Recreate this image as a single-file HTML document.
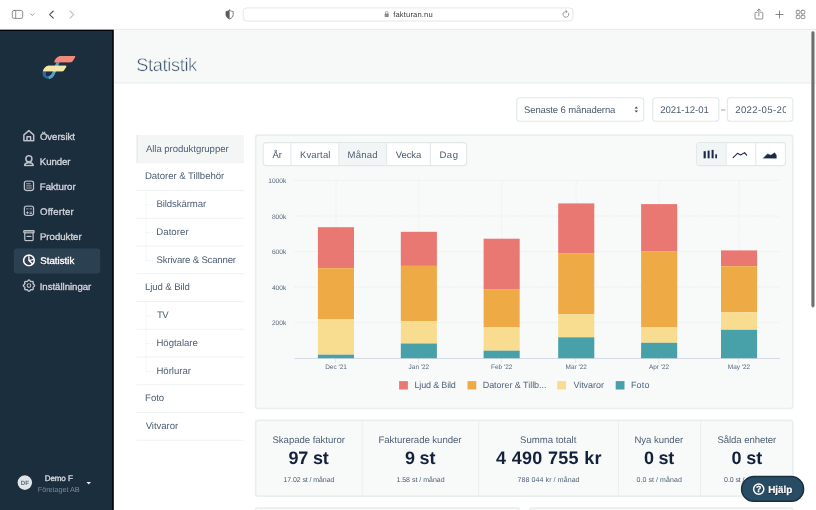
<!DOCTYPE html>
<html lang="sv">
<head>
<meta charset="utf-8">
<title>Statistik – Fakturan.nu</title>
<style>
html,body{margin:0;padding:0}
body{width:816px;height:510px;overflow:hidden;background:#fff;position:relative;font-family:"Liberation Sans",sans-serif;-webkit-font-smoothing:antialiased}
.a{position:absolute;box-sizing:border-box}
.t{position:absolute;white-space:nowrap;line-height:14px;height:14px}
.tw{left:0;top:0;width:816px;height:510px;will-change:transform;text-rendering:geometricPrecision}
</style>
</head>
<body>
<svg class="a" style="left:0;top:0" width="816" height="510" viewBox="0 0 816 510">
<rect x="0" y="0" width="816" height="29.2" fill="#ffffff"/>
<rect x="0" y="28.9" width="816" height="0.9" fill="#dfe1e1"/>
<rect x="243.2" y="7.9" width="329.8" height="13.1" rx="3.6" fill="#fff" stroke="#e2e2e2" stroke-width="0.9"/>
<rect x="113.8" y="29.7" width="702.2" height="53" fill="#f7f9f9"/>
<rect x="113.8" y="82.4" width="702.2" height="1" fill="#e4e9e9"/>
<rect x="0" y="29.7" width="113.8" height="481" fill="#020406"/>
<rect x="0" y="30.9" width="112.15" height="480" fill="#1b2e3e"/>
<rect x="13.8" y="248.5" width="86.4" height="24.9" rx="3" fill="#2b4051"/>
<rect x="136.6" y="135" width="107.4" height="27.5" fill="#f4f6f6"/>
<rect x="136.6" y="135" width="1" height="27.5" fill="#e2e7e7"/>
<rect x="811.2" y="31" width="3.5" height="276.4" rx="1.75" fill="#6f6f6f" stroke="#fbfbfb" stroke-opacity="0.7" stroke-width="0.5"/>
</svg>
<svg class="a" style="left:0;top:0;will-change:transform" width="816" height="30" viewBox="0 0 816 30" fill="none" stroke-linecap="round" stroke-linejoin="round" text-rendering="geometricPrecision">
<rect x="12.3" y="10.4" width="10.4" height="8" rx="1.8" stroke="#7b7b7b" stroke-width="0.85"/>
<path d="M15.7 10.6 V18.2" stroke="#7b7b7b" stroke-width="0.8"/>
<path d="M30.6 13.8 L32.3 15.5 L34 13.8" stroke="#7b7b7b" stroke-width="0.8"/>
<path d="M53.3 11 L49.6 14.6 L53.3 18.2" stroke="#4a4a4a" stroke-width="1.05"/>
<path d="M70 11 L73.7 14.6 L70 18.2" stroke="#bdbdbd" stroke-width="1.05"/>
<path d="M229.6 10.2 C231 11.2 232.2 11.4 233.2 11.4 V14.6 C233.2 16.8 231.6 18.2 229.6 19 C227.6 18.2 226 16.8 226 14.6 V11.4 C227 11.4 228.2 11.2 229.6 10.2 Z" stroke="#5a5a5a" stroke-width="0.8"/>
<path d="M229.6 10.2 C228.2 11.2 227 11.4 226 11.4 V14.6 C226 16.8 227.6 18.2 229.6 19 Z" fill="#5a5a5a" stroke="none"/>
<rect x="384.7" y="13.6" width="4" height="3.3" rx="0.6" fill="#8a8a8a"/>
<path d="M385.5 13.6 V12.6 A1.2 1.2 0 0 1 387.9 12.6 V13.6" stroke="#8a8a8a" stroke-width="0.7"/>
<path d="M568.6 13.2 A2.9 2.9 0 1 1 566.6 11.5" stroke="#7a7a7a" stroke-width="0.75"/>
<path d="M565.8 10.2 L567.2 11.5 L565.8 12.9" stroke="#7a7a7a" stroke-width="0.7"/>
<path d="M757.2 12.4 H756 Q755 12.4 755 13.4 V18 Q755 19 756 19 H761.8 Q762.8 19 762.8 18 V13.4 Q762.8 12.4 761.8 12.4 H760.6" stroke="#7b7b7b" stroke-width="0.85"/>
<path d="M758.9 15.8 V9.2 M757.2 10.8 L758.9 9.1 L760.6 10.8" stroke="#7b7b7b" stroke-width="0.85"/>
<path d="M775.9 14.5 H783.1 M779.5 10.9 V18.1" stroke="#7b7b7b" stroke-width="0.9"/>
<rect x="796.3" y="10.4" width="3.6" height="3.4" rx="0.9" stroke="#7b7b7b" stroke-width="0.85"/>
<rect x="796.3" y="15.2" width="3.6" height="3.4" rx="0.9" stroke="#7b7b7b" stroke-width="0.85"/>
<rect x="801.2" y="10.4" width="3.6" height="3.4" rx="0.9" stroke="#7b7b7b" stroke-width="0.85"/>
<rect x="801.2" y="15.2" width="3.6" height="3.4" rx="0.9" stroke="#7b7b7b" stroke-width="0.85"/>
</svg>
<svg class="a" style="left:0;top:0;filter:drop-shadow(0 0 0.5px rgba(0,0,30,.9)) drop-shadow(0 0.4px 0.4px rgba(0,0,30,.6))" width="114" height="510" viewBox="0 0 114 510" fill="none" stroke-linejoin="round" stroke-linecap="round" text-rendering="geometricPrecision">
<g stroke="none"><path d="M42.5 71.6 C41.5 75.6 44.2 79.5 49.3 79 C51.2 78.8 52.6 78 53.6 76.6 L51.4 74.4 C50.6 75.8 49.4 76.3 48 76.3 C45.9 76.3 45.5 74.2 46.3 71.6 Z" fill="#2c6a92"/><path d="M56.2 62.2 L59.7 62.2 L55.7 72.6 C54.4 76.2 52.4 78.7 49.3 79 L48.2 76.3 C50.3 76 51.6 74.4 52.6 71.8 Z" fill="#5aa0c4"/><path d="M59.6 55.9 H74.4 C75.5 55.9 75.7 56.6 75.1 57.6 L72.9 61 C72.2 62 71.4 62.4 70.2 62.4 H54 C54.6 59.4 56.4 56.6 59.6 55.9 Z" fill="#f08a7c"/><path d="M48.4 65.6 H65.4 C66.5 65.6 66.7 66.3 66.1 67.3 L64.2 70.2 C63.5 71.2 62.7 71.6 61.5 71.6 H42.7 C43.3 68.8 45.2 66.2 48.4 65.6 Z" fill="#f3e6a8"/></g>
<path d="M23.9 134.9 L28.8 130.6 L33.7 134.9 V140.7 H23.9 Z M27 140.7 V136.8 H30.6 V140.7" stroke="#bcc3cb" stroke-width="1.6"/>
<circle cx="28.9" cy="158.8" r="3.05" stroke="#bcc3cb" stroke-width="1.6"/>
<path d="M24.6 165.5 C24.8 163.2 26.6 162.6 28.9 162.6 S33 163.2 33.2 165.5 Z" stroke="#bcc3cb" stroke-width="1.6"/>
<rect x="24.35" y="181.15" width="9.2" height="9.3" rx="2.1" stroke="#bcc3cb" stroke-width="1.35"/>
<path d="M26.6 183.8 H30.4 M26.6 185.9 H31.4 M26.6 188 H31.4" stroke="#bcc3cb" stroke-width="1"/>
<rect x="24.35" y="206.1" width="9.2" height="9.3" rx="2.1" stroke="#bcc3cb" stroke-width="1.35"/>
<path d="M26.5 208.9 H28.2 M29.9 208.9 H31.6 M26.4 212.7 H28.4 M27.4 211.7 V213.7 M29.9 212.1 H31.6 M29.9 213.4 H31.6" stroke="#bcc3cb" stroke-width="0.95"/>
<rect x="23.8" y="230.6" width="10.3" height="2.2" rx="0.5" stroke="#bcc3cb" stroke-width="1.3" fill="#bcc3cb" fill-opacity="0.55"/>
<path d="M24.8 232.8 V239.4 Q24.8 240.6 26 240.6 H31.9 Q33.1 240.6 33.1 239.4 V232.8" stroke="#bcc3cb" stroke-width="1.35"/>
<path d="M27 236.4 H30.9" stroke="#bcc3cb" stroke-width="1.3"/>
<circle cx="28.95" cy="260.45" r="5.3" stroke="#fff" stroke-width="1.65"/>
<path d="M28.9 256.6 V260.6 L32.2 263.4 M28.9 260.6 L33 259.6" stroke="#fff" stroke-width="1.45"/>
<path d="M28.97 280.00 L29.19 280.03 L29.40 280.12 L29.60 280.26 L29.79 280.44 L29.96 280.65 L30.11 280.85 L30.25 281.05 L30.39 281.22 L30.54 281.35 L30.69 281.44 L30.87 281.49 L31.06 281.50 L31.28 281.48 L31.52 281.44 L31.78 281.40 L32.04 281.38 L32.30 281.38 L32.54 281.42 L32.75 281.51 L32.93 281.64 L33.06 281.82 L33.15 282.03 L33.19 282.27 L33.19 282.53 L33.17 282.79 L33.13 283.05 L33.09 283.29 L33.07 283.51 L33.08 283.70 L33.13 283.88 L33.22 284.03 L33.35 284.18 L33.52 284.32 L33.72 284.46 L33.92 284.61 L34.13 284.78 L34.31 284.97 L34.45 285.17 L34.54 285.38 L34.57 285.60 L34.54 285.82 L34.45 286.03 L34.31 286.23 L34.13 286.42 L33.92 286.59 L33.72 286.74 L33.52 286.88 L33.35 287.02 L33.22 287.17 L33.13 287.32 L33.08 287.50 L33.07 287.69 L33.09 287.91 L33.13 288.15 L33.17 288.41 L33.19 288.67 L33.19 288.93 L33.15 289.17 L33.06 289.38 L32.93 289.56 L32.75 289.69 L32.54 289.78 L32.30 289.82 L32.04 289.82 L31.78 289.80 L31.52 289.76 L31.28 289.72 L31.06 289.70 L30.87 289.71 L30.69 289.76 L30.54 289.85 L30.39 289.98 L30.25 290.15 L30.11 290.35 L29.96 290.55 L29.79 290.76 L29.60 290.94 L29.40 291.08 L29.19 291.17 L28.97 291.20 L28.75 291.17 L28.54 291.08 L28.34 290.94 L28.15 290.76 L27.98 290.55 L27.83 290.35 L27.69 290.15 L27.55 289.98 L27.40 289.85 L27.25 289.76 L27.07 289.71 L26.88 289.70 L26.66 289.72 L26.42 289.76 L26.16 289.80 L25.90 289.82 L25.64 289.82 L25.40 289.78 L25.19 289.69 L25.01 289.56 L24.88 289.38 L24.79 289.17 L24.75 288.93 L24.75 288.67 L24.77 288.41 L24.81 288.15 L24.85 287.91 L24.87 287.69 L24.86 287.50 L24.81 287.32 L24.72 287.17 L24.59 287.02 L24.42 286.88 L24.22 286.74 L24.02 286.59 L23.81 286.42 L23.63 286.23 L23.49 286.03 L23.40 285.82 L23.37 285.60 L23.40 285.38 L23.49 285.17 L23.63 284.97 L23.81 284.78 L24.02 284.61 L24.22 284.46 L24.42 284.32 L24.59 284.18 L24.72 284.03 L24.81 283.88 L24.86 283.70 L24.87 283.51 L24.85 283.29 L24.81 283.05 L24.77 282.79 L24.75 282.53 L24.75 282.27 L24.79 282.03 L24.88 281.82 L25.01 281.64 L25.19 281.51 L25.40 281.42 L25.64 281.38 L25.90 281.38 L26.16 281.40 L26.42 281.44 L26.66 281.48 L26.88 281.50 L27.07 281.49 L27.25 281.44 L27.40 281.35 L27.55 281.22 L27.69 281.05 L27.83 280.85 L27.98 280.65 L28.15 280.44 L28.34 280.26 L28.54 280.12 L28.75 280.03 L28.97 280.00 Z" stroke="#bcc3cb" stroke-width="1.5"/>
<circle cx="28.97" cy="285.6" r="1.85" stroke="#bcc3cb" stroke-width="1.2"/>
<circle cx="24.8" cy="482.6" r="7.3" fill="#dfe5e9" stroke="none"/>
<text x="24.8" y="484.8" font-family="Liberation Sans, sans-serif" font-size="6.1" font-weight="700" fill="#5a6c80" stroke="none" text-anchor="middle">DF</text>
<path d="M86.3 482 H91.1 L88.7 484.6 Z" fill="#e8ecef" stroke="none"/>
</svg>
<!-- boxes -->
<svg class="a" style="left:0;top:0;will-change:transform" width="816" height="510" viewBox="0 0 816 510" fill="none">
<rect x="516.8" y="97.7" width="126.90" height="23.60" rx="3" fill="#fff" stroke="#e1e8e8" stroke-width="1.1"/>
<rect x="652.8" y="97.7" width="66.00" height="23.60" rx="3" fill="#fff" stroke="#e1e8e8" stroke-width="1.1"/>
<rect x="727.3" y="97.7" width="65.60" height="23.60" rx="3" fill="#fff" stroke="#e1e8e8" stroke-width="1.1"/>
<rect x="255.6" y="135.1" width="537.20" height="273.40" rx="2.6" fill="#f8fafa" stroke="#eaeeee" stroke-width="1.7"/>
<rect x="263.2" y="142.6" width="203.40" height="23.00" rx="3" fill="#fff" stroke="#e1e8e8" stroke-width="1.1"/>
<rect x="338.8" y="143.1" width="47.9" height="22" fill="#f2f5f5"/>
<path d="M290.9 143.1 V165.1" stroke="#e1e8e8" stroke-width="1.0"/>
<path d="M338.8 143.1 V165.1" stroke="#e1e8e8" stroke-width="1.0"/>
<path d="M386.7 143.1 V165.1" stroke="#e1e8e8" stroke-width="1.0"/>
<path d="M430.4 143.1 V165.1" stroke="#e1e8e8" stroke-width="1.0"/>
<rect x="696.6" y="142.6" width="88.80" height="23.00" rx="3" fill="#fff" stroke="#e1e8e8" stroke-width="1.1"/>
<path d="M726.2 143.1 V165.1 H699.1 Q697.1 165.1 697.1 163.1 V145.1 Q697.1 143.1 699.1 143.1 Z" fill="#f2f5f5"/>
<path d="M726.2 143.1 V165.1" stroke="#e1e8e8" stroke-width="1.0"/>
<path d="M755.8 143.1 V165.1" stroke="#e1e8e8" stroke-width="1.0"/>
<rect x="255.6" y="420.4" width="537.20" height="75.70" rx="2.6" fill="#f8fafa" stroke="#eaeeee" stroke-width="1.7"/>
<path d="M362.2 421 V495.6" stroke="#eaeeee" stroke-width="1.0"/>
<path d="M478.7 421 V495.6" stroke="#eaeeee" stroke-width="1.0"/>
<path d="M618.4 421 V495.6" stroke="#eaeeee" stroke-width="1.0"/>
<path d="M700.5 421 V495.6" stroke="#eaeeee" stroke-width="1.0"/>
<rect x="255.6" y="508.2" width="263.80" height="21.80" rx="2.6" fill="#f8fafa" stroke="#eaeeee" stroke-width="1.7"/>
<rect x="529.6" y="508.2" width="263.20" height="21.80" rx="2.6" fill="#f8fafa" stroke="#eaeeee" stroke-width="1.7"/>
</svg>
<div class="a" style="left:728.3px;top:98.8px;width:58px;height:21.8px;overflow:hidden;will-change:transform;text-rendering:geometricPrecision"><span class="t" id="d2" style="left:7.2px;top:5px;font-size:9.6px;color:#4a5b70;letter-spacing:0.36px">2022-05-20</span></div>
<!-- product list -->
<svg class="a" style="left:0;top:0;will-change:transform" width="816" height="510" viewBox="0 0 816 510">
<rect x="136.6" y="162.25" width="107.4" height="1" fill="#eff2f2"/>
<rect x="136.6" y="190.00" width="107.4" height="1" fill="#eff2f2"/>
<rect x="136.6" y="217.75" width="107.4" height="1" fill="#eff2f2"/>
<rect x="136.6" y="245.50" width="107.4" height="1" fill="#eff2f2"/>
<rect x="136.6" y="273.25" width="107.4" height="1" fill="#eff2f2"/>
<rect x="136.6" y="301.00" width="107.4" height="1" fill="#eff2f2"/>
<rect x="136.6" y="328.75" width="107.4" height="1" fill="#eff2f2"/>
<rect x="136.6" y="356.50" width="107.4" height="1" fill="#eff2f2"/>
<rect x="136.6" y="384.25" width="107.4" height="1" fill="#eff2f2"/>
<rect x="136.6" y="412.00" width="107.4" height="1" fill="#eff2f2"/>
<rect x="136.6" y="439.75" width="107.4" height="1" fill="#eff2f2"/>
<path d="M146.1 190.5 V260.4" stroke="#dfe5e8" stroke-width="0.7" stroke-dasharray="0.9 1.1" fill="none"/><path d="M146.1 204.9 H153.5" stroke="#dfe5e8" stroke-width="0.7" stroke-dasharray="0.9 1.1" fill="none"/><path d="M146.1 232.6 H153.5" stroke="#dfe5e8" stroke-width="0.7" stroke-dasharray="0.9 1.1" fill="none"/><path d="M146.1 260.4 H153.5" stroke="#dfe5e8" stroke-width="0.7" stroke-dasharray="0.9 1.1" fill="none"/>
<path d="M146.1 301.5 V371.4" stroke="#dfe5e8" stroke-width="0.7" stroke-dasharray="0.9 1.1" fill="none"/><path d="M146.1 315.9 H153.5" stroke="#dfe5e8" stroke-width="0.7" stroke-dasharray="0.9 1.1" fill="none"/><path d="M146.1 343.6 H153.5" stroke="#dfe5e8" stroke-width="0.7" stroke-dasharray="0.9 1.1" fill="none"/><path d="M146.1 371.4 H153.5" stroke="#dfe5e8" stroke-width="0.7" stroke-dasharray="0.9 1.1" fill="none"/>
</svg>
<!-- chart card -->
<svg class="a" style="left:0;top:0;will-change:transform" width="816" height="510" viewBox="0 0 816 510" font-family="Liberation Sans, sans-serif" text-rendering="geometricPrecision">
<line x1="294.5" x2="780" y1="180.4" y2="180.4" stroke="#e3e7e8" stroke-width="0.8" stroke-dasharray="1 1.2"/>
<line x1="294.5" x2="780" y1="216.0" y2="216.0" stroke="#e3e7e8" stroke-width="0.8" stroke-dasharray="1 1.2"/>
<line x1="294.5" x2="780" y1="251.5" y2="251.5" stroke="#e3e7e8" stroke-width="0.8" stroke-dasharray="1 1.2"/>
<line x1="294.5" x2="780" y1="287.1" y2="287.1" stroke="#e3e7e8" stroke-width="0.8" stroke-dasharray="1 1.2"/>
<line x1="294.5" x2="780" y1="322.6" y2="322.6" stroke="#e3e7e8" stroke-width="0.8" stroke-dasharray="1 1.2"/>
<line x1="336.0" x2="336.0" y1="180.4" y2="358.2" stroke="#e6eaea" stroke-width="0.8" stroke-dasharray="1 1.2"/>
<line x1="335.6" x2="335.6" y1="358.59999999999997" y2="363.2" stroke="#dde3ea" stroke-width="0.9"/>
<line x1="418.9" x2="418.9" y1="180.4" y2="358.2" stroke="#e6eaea" stroke-width="0.8" stroke-dasharray="1 1.2"/>
<line x1="418.5" x2="418.5" y1="358.59999999999997" y2="363.2" stroke="#dde3ea" stroke-width="0.9"/>
<line x1="501.7" x2="501.7" y1="180.4" y2="358.2" stroke="#e6eaea" stroke-width="0.8" stroke-dasharray="1 1.2"/>
<line x1="501.3" x2="501.3" y1="358.59999999999997" y2="363.2" stroke="#dde3ea" stroke-width="0.9"/>
<line x1="576.2" x2="576.2" y1="180.4" y2="358.2" stroke="#e6eaea" stroke-width="0.8" stroke-dasharray="1 1.2"/>
<line x1="575.8000000000001" x2="575.8000000000001" y1="358.59999999999997" y2="363.2" stroke="#dde3ea" stroke-width="0.9"/>
<line x1="659.1" x2="659.1" y1="180.4" y2="358.2" stroke="#e6eaea" stroke-width="0.8" stroke-dasharray="1 1.2"/>
<line x1="658.7" x2="658.7" y1="358.59999999999997" y2="363.2" stroke="#dde3ea" stroke-width="0.9"/>
<line x1="739.0" x2="739.0" y1="180.4" y2="358.2" stroke="#e6eaea" stroke-width="0.8" stroke-dasharray="1 1.2"/>
<line x1="738.6" x2="738.6" y1="358.59999999999997" y2="363.2" stroke="#dde3ea" stroke-width="0.9"/>
<line x1="294.5" x2="780" y1="358.5" y2="358.5" stroke="#d5dbe6" stroke-width="1"/>
<rect x="317.9" y="227.2" width="36.1" height="41.0" fill="#e97873"/>
<rect x="317.9" y="268.2" width="36.1" height="51.1" fill="#eeab45"/>
<rect x="317.9" y="319.3" width="36.1" height="35.4" fill="#f8dc90"/>
<rect x="317.9" y="354.7" width="36.1" height="3.5" fill="#48a0a8"/>
<rect x="400.8" y="231.8" width="36.1" height="34.1" fill="#e97873"/>
<rect x="400.8" y="265.9" width="36.1" height="55.3" fill="#eeab45"/>
<rect x="400.8" y="321.2" width="36.1" height="22.3" fill="#f8dc90"/>
<rect x="400.8" y="343.5" width="36.1" height="14.7" fill="#48a0a8"/>
<rect x="483.6" y="238.7" width="36.1" height="50.9" fill="#e97873"/>
<rect x="483.6" y="289.6" width="36.1" height="37.8" fill="#eeab45"/>
<rect x="483.6" y="327.4" width="36.1" height="23.3" fill="#f8dc90"/>
<rect x="483.6" y="350.7" width="36.1" height="7.5" fill="#48a0a8"/>
<rect x="558.2" y="203.4" width="36.1" height="50.2" fill="#e97873"/>
<rect x="558.2" y="253.6" width="36.1" height="60.7" fill="#eeab45"/>
<rect x="558.2" y="314.3" width="36.1" height="23.0" fill="#f8dc90"/>
<rect x="558.2" y="337.3" width="36.1" height="20.9" fill="#48a0a8"/>
<rect x="641.1" y="204.1" width="36.1" height="47.0" fill="#e97873"/>
<rect x="641.1" y="251.1" width="36.1" height="75.9" fill="#eeab45"/>
<rect x="641.1" y="327.0" width="36.1" height="15.8" fill="#f8dc90"/>
<rect x="641.1" y="342.8" width="36.1" height="15.4" fill="#48a0a8"/>
<rect x="721.0" y="250.4" width="36.1" height="15.8" fill="#e97873"/>
<rect x="721.0" y="266.2" width="36.1" height="45.9" fill="#eeab45"/>
<rect x="721.0" y="312.1" width="36.1" height="17.7" fill="#f8dc90"/>
<rect x="721.0" y="329.8" width="36.1" height="28.4" fill="#48a0a8"/>
<text x="286.2" y="182.9" font-size="6.6" fill="#55657a" text-anchor="end">1000k</text>
<text x="286.2" y="218.5" font-size="6.6" fill="#55657a" text-anchor="end">800k</text>
<text x="286.2" y="254.0" font-size="6.6" fill="#55657a" text-anchor="end">600k</text>
<text x="286.2" y="289.6" font-size="6.6" fill="#55657a" text-anchor="end">400k</text>
<text x="286.2" y="325.1" font-size="6.6" fill="#55657a" text-anchor="end">200k</text>
<text x="336.0" y="368.8" font-size="6.45" fill="#55657a" text-anchor="middle">Dec '21</text>
<text x="418.9" y="368.8" font-size="6.45" fill="#55657a" text-anchor="middle">Jan '22</text>
<text x="501.7" y="368.8" font-size="6.45" fill="#55657a" text-anchor="middle">Feb '22</text>
<text x="576.2" y="368.8" font-size="6.45" fill="#55657a" text-anchor="middle">Mar '22</text>
<text x="659.1" y="368.8" font-size="6.45" fill="#55657a" text-anchor="middle">Apr '22</text>
<text x="739.0" y="368.8" font-size="6.45" fill="#55657a" text-anchor="middle">May '22</text>
<rect x="399.1" y="381.1" width="8.8" height="8.4" fill="#e97873"/>
<rect x="467.5" y="381.1" width="8.8" height="8.4" fill="#eeab45"/>
<rect x="557.2" y="381.1" width="8.8" height="8.4" fill="#f8dc90"/>
<rect x="615.7" y="381.1" width="8.8" height="8.4" fill="#48a0a8"/>
</svg>
<!-- stats card -->
<div class="a tw" id="tw1">
<span class="t" style="left:393.20px;top:8.00px;font-size:7.6px;font-weight:400;color:#3c3c3c;letter-spacing:0.151px;">fakturan.nu</span>
<span class="t" style="left:136.30px;top:58.00px;font-size:18.2px;font-weight:400;color:#3f546b;letter-spacing:-0.349px;-webkit-text-stroke:0.45px #f7f9f9;">Statistik</span>
<span class="t" style="left:39.90px;top:131.00px;font-size:9.6px;font-weight:400;color:#cfd4da;letter-spacing:-0.016px;-webkit-text-stroke:0.4px currentColor;text-shadow:0 0 0.8px rgba(0,0,30,.85),0 0.5px 0.6px rgba(0,0,30,.7);">Översikt</span>
<span class="t" style="left:39.80px;top:156.00px;font-size:9.6px;font-weight:400;color:#cfd4da;letter-spacing:-0.046px;-webkit-text-stroke:0.4px currentColor;text-shadow:0 0 0.8px rgba(0,0,30,.85),0 0.5px 0.6px rgba(0,0,30,.7);">Kunder</span>
<span class="t" style="left:39.80px;top:181.00px;font-size:9.6px;font-weight:400;color:#cfd4da;letter-spacing:0.022px;-webkit-text-stroke:0.4px currentColor;text-shadow:0 0 0.8px rgba(0,0,30,.85),0 0.5px 0.6px rgba(0,0,30,.7);">Fakturor</span>
<span class="t" style="left:40.00px;top:206.00px;font-size:9.6px;font-weight:400;color:#cfd4da;letter-spacing:0.203px;-webkit-text-stroke:0.4px currentColor;text-shadow:0 0 0.8px rgba(0,0,30,.85),0 0.5px 0.6px rgba(0,0,30,.7);">Offerter</span>
<span class="t" style="left:39.90px;top:231.00px;font-size:9.6px;font-weight:400;color:#cfd4da;letter-spacing:0.020px;-webkit-text-stroke:0.4px currentColor;text-shadow:0 0 0.8px rgba(0,0,30,.85),0 0.5px 0.6px rgba(0,0,30,.7);">Produkter</span>
<span class="t" style="left:40.30px;top:255.00px;font-size:9.6px;font-weight:400;color:#ffffff;letter-spacing:0.051px;-webkit-text-stroke:0.4px currentColor;text-shadow:0 0 0.8px rgba(0,0,30,.85),0 0.5px 0.6px rgba(0,0,30,.7);">Statistik</span>
<span class="t" style="left:39.70px;top:281.00px;font-size:9.6px;font-weight:400;color:#cfd4da;letter-spacing:-0.013px;-webkit-text-stroke:0.4px currentColor;text-shadow:0 0 0.8px rgba(0,0,30,.85),0 0.5px 0.6px rgba(0,0,30,.7);">Inställningar</span>
<span class="t" style="left:44.70px;top:472.00px;font-size:8.0px;font-weight:400;color:#d5d9de;letter-spacing:-0.072px;-webkit-text-stroke:0.4px currentColor;text-shadow:0 0 0.8px rgba(0,0,30,.85),0 0.5px 0.6px rgba(0,0,30,.7);">Demo F</span>
<span class="t" style="left:37.80px;top:483.00px;font-size:7.3px;font-weight:400;color:#78899a;letter-spacing:-0.068px;">Företaget AB</span>
<span class="t" style="left:145.90px;top:143.00px;font-size:9.6px;font-weight:400;color:#4f6076;letter-spacing:-0.054px;">Alla produktgrupper</span>
<span class="t" style="left:144.90px;top:170.00px;font-size:9.6px;font-weight:400;color:#4f6076;letter-spacing:-0.034px;">Datorer &amp; Tillbehör</span>
<span class="t" style="left:156.40px;top:198.00px;font-size:9.6px;font-weight:400;color:#4f6076;letter-spacing:-0.091px;">Bildskärmar</span>
<span class="t" style="left:156.30px;top:226.00px;font-size:9.6px;font-weight:400;color:#4f6076;letter-spacing:0.048px;">Datorer</span>
<span class="t" style="left:156.60px;top:254.00px;font-size:9.6px;font-weight:400;color:#4f6076;letter-spacing:-0.191px;">Skrivare &amp; Scanner</span>
<span class="t" style="left:144.90px;top:281.00px;font-size:9.6px;font-weight:400;color:#4f6076;letter-spacing:-0.087px;">Ljud &amp; Bild</span>
<span class="t" style="left:157.00px;top:309.00px;font-size:9.6px;font-weight:400;color:#4f6076;letter-spacing:-0.733px;">TV</span>
<span class="t" style="left:156.40px;top:337.00px;font-size:9.6px;font-weight:400;color:#4f6076;letter-spacing:-0.012px;">Högtalare</span>
<span class="t" style="left:156.40px;top:365.00px;font-size:9.6px;font-weight:400;color:#4f6076;letter-spacing:0.004px;">Hörlurar</span>
<span class="t" style="left:145.10px;top:392.00px;font-size:9.6px;font-weight:400;color:#4f6076;letter-spacing:-0.059px;">Foto</span>
<span class="t" style="left:145.70px;top:420.00px;font-size:9.6px;font-weight:400;color:#4f6076;letter-spacing:-0.061px;">Vitvaror</span>
<span class="t" style="left:272.50px;top:149.00px;font-size:9.5px;font-weight:400;color:#4a5b70;letter-spacing:0.000px;">År</span>
<span class="t" style="left:299.90px;top:149.00px;font-size:9.5px;font-weight:400;color:#4a5b70;letter-spacing:0.165px;">Kvartal</span>
<span class="t" style="left:347.50px;top:149.00px;font-size:9.5px;font-weight:400;color:#4a5b70;letter-spacing:0.227px;">Månad</span>
<span class="t" style="left:395.80px;top:149.00px;font-size:9.5px;font-weight:400;color:#4a5b70;letter-spacing:-0.128px;">Vecka</span>
<span class="t" style="left:439.40px;top:149.00px;font-size:9.5px;font-weight:400;color:#4a5b70;letter-spacing:0.554px;">Dag</span>
<span class="t" style="left:524.00px;top:104.00px;font-size:9.5px;font-weight:400;color:#4a5b70;letter-spacing:-0.120px;">Senaste 6 månaderna</span>
<span class="t" style="left:660.20px;top:104.00px;font-size:9.6px;font-weight:400;color:#4a5b70;letter-spacing:-0.041px;">2021-12-01</span>
<span class="t" style="left:720.90px;top:103.00px;font-size:8.0px;font-weight:400;color:#4a5b70;letter-spacing:-0.153px;">–</span>
<span class="t" style="left:414.50px;top:378.00px;font-size:9.0px;font-weight:400;color:#52637a;letter-spacing:-0.168px;">Ljud &amp; Bild</span>
<span class="t" style="left:482.70px;top:378.00px;font-size:9.0px;font-weight:400;color:#52637a;letter-spacing:-0.042px;">Datorer &amp; Tillb...</span>
<span class="t" style="left:573.40px;top:378.00px;font-size:9.0px;font-weight:400;color:#52637a;letter-spacing:-0.045px;">Vitvaror</span>
<span class="t" style="left:630.90px;top:378.00px;font-size:9.0px;font-weight:400;color:#52637a;letter-spacing:0.163px;">Foto</span>
<span class="t" style="left:272.50px;top:434.00px;font-size:9.6px;font-weight:400;color:#4f6076;letter-spacing:-0.047px;">Skapade fakturor</span>
<span class="t" style="left:288.40px;top:451.00px;font-size:18px;font-weight:700;color:#14213d;letter-spacing:-0.166px;">97 st</span>
<span class="t" style="left:283.40px;top:474.00px;font-size:7.0px;font-weight:400;color:#4f6076;letter-spacing:-0.076px;">17.02 st / månad</span>
<span class="t" style="left:378.50px;top:434.00px;font-size:9.6px;font-weight:400;color:#4f6076;letter-spacing:-0.044px;">Fakturerade kunder</span>
<span class="t" style="left:404.90px;top:451.00px;font-size:18px;font-weight:700;color:#14213d;letter-spacing:-0.149px;">9 st</span>
<span class="t" style="left:396.40px;top:474.00px;font-size:7.0px;font-weight:400;color:#4f6076;letter-spacing:-0.007px;">1.58 st / månad</span>
<span class="t" style="left:520.10px;top:434.00px;font-size:9.6px;font-weight:400;color:#4f6076;letter-spacing:-0.025px;">Summa totalt</span>
<span class="t" style="left:496.10px;top:451.00px;font-size:18px;font-weight:700;color:#14213d;letter-spacing:0.305px;">4 490 755 kr</span>
<span class="t" style="left:517.50px;top:474.00px;font-size:7.0px;font-weight:400;color:#4f6076;letter-spacing:0.100px;">788 044 kr / månad</span>
<span class="t" style="left:634.40px;top:434.00px;font-size:9.6px;font-weight:400;color:#4f6076;letter-spacing:-0.030px;">Nya kunder</span>
<span class="t" style="left:644.10px;top:451.00px;font-size:18px;font-weight:700;color:#14213d;letter-spacing:-0.249px;">0 st</span>
<span class="t" style="left:636.40px;top:474.00px;font-size:7.0px;font-weight:400;color:#4f6076;letter-spacing:0.085px;">0.0 st / månad</span>
<span class="t" style="left:717.50px;top:434.00px;font-size:9.6px;font-weight:400;color:#4f6076;letter-spacing:-0.086px;">Sålda enheter</span>
<span class="t" style="left:731.40px;top:451.00px;font-size:18px;font-weight:700;color:#14213d;letter-spacing:-0.058px;">0 st</span>
<span class="t" style="left:724.10px;top:474.00px;font-size:7.0px;font-weight:400;color:#4f6076;letter-spacing:-0.084px;">0.0 st / månad</span>
</div>
<!-- help button -->
<svg class="a" style="left:0;top:0" width="816" height="510" viewBox="0 0 816 510"><rect x="741.6" y="476.6" width="62" height="24.7" rx="12.35" fill="#284c63" stroke="#18303f" stroke-width="1.5"/></svg>
<div class="a tw" id="tw2">
<span class="t" style="left:768.20px;top:484.00px;font-size:9.9px;font-weight:700;color:#ffffff;letter-spacing:0.009px;-webkit-text-stroke:0.2px currentColor;text-shadow:0 0 0.8px rgba(0,0,30,.8),0 0.5px 0.5px rgba(0,0,30,.6);">Hjälp</span>
</div>
<svg class="a" style="left:0;top:0;will-change:transform" width="816" height="510" viewBox="0 0 816 510" fill="none" stroke-linecap="round" stroke-linejoin="round" text-rendering="geometricPrecision">
<rect x="703.6" y="151.2" width="2.2" height="7.1" fill="#1b2a4a"/>
<rect x="707.6" y="150.6" width="2.0" height="7.7" fill="#1b2a4a"/>
<rect x="711.6" y="149.9" width="2.0" height="8.4" fill="#1b2a4a"/>
<rect x="715.3" y="154.3" width="1.7" height="4.0" fill="#1b2a4a"/>
<path d="M733.1 157.6 L737.5 153.3 L740.6 155 L744.6 152.6 L746.6 155.2" stroke="#1b2a4a" stroke-width="1.1"/>
<path d="M763.5 158 L767.5 153.9 L770.9 155.2 L774.7 152.8 L776.3 155.2 V158 Z" fill="#1b2a4a" stroke="#1b2a4a" stroke-width="0.5"/>
<path d="M634.6 108.6 L636.3 106.6 L638 108.6 Z M634.6 110.6 L636.3 112.6 L638 110.6 Z" fill="#333f50" stroke="none"/>
<circle cx="758.7" cy="489.1" r="5.1" stroke="#fff" stroke-width="1.5"/>
<text x="758.7" y="492.1" font-family="Liberation Sans, sans-serif" font-size="8.8" font-weight="700" fill="#fff" stroke="#fff" stroke-width="0.25" text-anchor="middle">?</text>
</svg>
</body>
</html>
